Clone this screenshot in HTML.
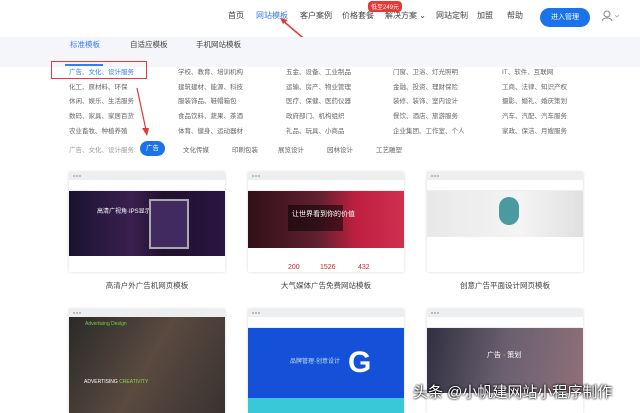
<!DOCTYPE html>
<html><head><meta charset="utf-8"><style>
*{margin:0;padding:0;box-sizing:border-box}
body{width:640px;height:413px;overflow:hidden;background:#fff;font-family:"Liberation Sans","Noto Sans CJK SC",sans-serif;position:relative;color:#555}
.a{position:absolute;white-space:nowrap}
.nav{font-size:8px;color:#444;top:10px}
.band{position:absolute;left:0;top:37px;width:640px;height:30px;background:#f4f6f9}
.cat{font-size:6.5px;color:#666}
.card{position:absolute;width:156px;background:#fff;box-shadow:0 0 3px rgba(0,0,0,.15);overflow:hidden}
.bar{height:8px;background:#eceef0;position:relative}
.bar:before{content:"";position:absolute;left:4px;top:3px;width:2px;height:2px;background:#bbb;box-shadow:3px 0 #bbb,6px 0 #bbb}
.hd{height:11px;background:#fff;border-bottom:1px solid #eee}
.lab{font-size:7.5px;color:#444;text-align:center;width:156px}
</style></head><body>
<div class="a nav" style="left:228px">首页</div>
<div class="a nav" style="left:256px;color:#3a7cf0">网站模板</div>
<div class="a nav" style="left:300px">客户案例</div>
<div class="a nav" style="left:342px">价格套餐</div>
<div class="a nav" style="left:385px">解决方案 ⌄</div>
<div class="a nav" style="left:436px">网站定制</div>
<div class="a nav" style="left:477px">加盟</div>
<div class="a nav" style="left:507px">帮助</div>
<div class="a" style="left:368px;top:1px;background:#e53935;color:#fff;font-size:6px;padding:1px 3px;border-radius:4px">低至249元</div>
<div class="a" style="left:540px;top:8px;width:50px;height:19px;background:#1a73e8;border-radius:10px;color:#fff;font-size:7px;text-align:center;line-height:19px">进入管理</div>
<svg class="a" style="left:602px;top:10px" width="18" height="12"><circle cx="5" cy="4" r="3" fill="none" stroke="#888"/><path d="M0 11c1-4 9-4 10 0" fill="none" stroke="#888"/><path d="M13 5l2 2 2-2" fill="none" stroke="#aaa" stroke-width=".8"/></svg>
<svg class="a" style="left:280px;top:18px" width="40" height="35"><path d="M2 2L35 30" stroke="#e53935" stroke-width="1.5"/><path d="M0 0l8 2-5 4z" fill="#e53935"/></svg>
<div class="band"></div>
<div class="a" style="left:70px;top:39px;font-size:7.5px;color:#3a7cf0">标准模板</div>
<div class="a" style="left:65px;top:64px;width:38px;height:2px;background:#3a7cf0"></div>
<div class="a" style="left:130px;top:39px;font-size:7.5px;color:#444">自适应模板</div>
<div class="a" style="left:196px;top:39px;font-size:7.5px;color:#444">手机网站模板</div>
<div class="a" style="left:51px;top:61px;width:96px;height:18px;border:1.5px solid #e53935"></div>
<svg class="a" style="left:134px;top:86px" width="20" height="52"><path d="M3 2L12 44" stroke="#e53935" stroke-width="1.2"/><path d="M8 42l7 0-2 8z" fill="#e53935"/></svg>
<div class="a cat" style="left:69px;top:66px;color:#3a7cf0">广告、文化、设计服务</div>
<div class="a cat" style="left:178px;top:66px">学校、教育、培训机构</div>
<div class="a cat" style="left:286px;top:66px">五金、设备、工业制品</div>
<div class="a cat" style="left:393px;top:66px">门窗、卫浴、灯光照明</div>
<div class="a cat" style="left:502px;top:66px">IT、软件、互联网</div>
<div class="a cat" style="left:69px;top:81px">化工、原材料、环保</div>
<div class="a cat" style="left:178px;top:81px">建筑建材、能源、科技</div>
<div class="a cat" style="left:286px;top:81px">运输、房产、物业管理</div>
<div class="a cat" style="left:393px;top:81px">金融、投资、理财保险</div>
<div class="a cat" style="left:502px;top:81px">工商、法律、知识产权</div>
<div class="a cat" style="left:69px;top:95px">休闲、娱乐、生活服务</div>
<div class="a cat" style="left:178px;top:95px">服装饰品、鞋帽箱包</div>
<div class="a cat" style="left:286px;top:95px">医疗、保健、医药仪器</div>
<div class="a cat" style="left:393px;top:95px">装修、装饰、室内设计</div>
<div class="a cat" style="left:502px;top:95px">摄影、婚礼、婚庆策划</div>
<div class="a cat" style="left:69px;top:110px">数码、家具、家居百货</div>
<div class="a cat" style="left:178px;top:110px">食品饮料、蔬果、茶酒</div>
<div class="a cat" style="left:286px;top:110px">政府部门、机构组织</div>
<div class="a cat" style="left:393px;top:110px">餐饮、酒店、旅游服务</div>
<div class="a cat" style="left:502px;top:110px">汽车、汽配、汽车服务</div>
<div class="a cat" style="left:69px;top:125px">农业畜牧、种植养殖</div>
<div class="a cat" style="left:178px;top:125px">体育、健身、运动器材</div>
<div class="a cat" style="left:286px;top:125px">礼品、玩具、小商品</div>
<div class="a cat" style="left:393px;top:125px">企业集团、工作室、个人</div>
<div class="a cat" style="left:502px;top:125px">家政、保洁、月嫂服务</div>
<div class="a cat" style="left:69px;top:144px;color:#999">广告、文化、设计服务:</div>
<div class="a" style="left:140px;top:141px;width:25px;height:15px;background:#1a73e8;border-radius:8px;color:#fff;font-size:6.5px;text-align:center;line-height:15px">广告</div>
<div class="a cat" style="left:183px;top:144px">文化传媒</div>
<div class="a cat" style="left:232px;top:144px">印刷包装</div>
<div class="a cat" style="left:278px;top:144px">展览设计</div>
<div class="a cat" style="left:327px;top:144px">园林设计</div>
<div class="a cat" style="left:376px;top:144px">工艺雕塑</div>

<div class="card" style="left:69px;top:172px;height:100px"><div class="bar"></div><div class="hd"></div>
<div style="height:65px;background:linear-gradient(90deg,#1a1230,#3a2050 40%,#201030 60%,#2a1540);position:relative"><div class="a" style="left:28px;top:15px;color:#fff;font-size:6px">高清广视角·IPS显示</div><div class="a" style="left:80px;top:8px;width:40px;height:50px;border:2px solid #aaa;background:#402a60"></div></div></div>
<div class="a lab" style="left:69px;top:280px">高清户外广告机网页模板</div>

<div class="card" style="left:248px;top:172px;height:100px"><div class="bar"></div><div class="hd"></div>
<div style="height:57px;background:linear-gradient(90deg,#301018,#602030 45%,#c02040 70%,#d03050);position:relative"><div class="a" style="left:40px;top:14px;width:55px;height:26px;background:rgba(0,0,0,.5)"></div><div class="a" style="left:44px;top:18px;color:#fff;font-size:7px">让世界看到你的价值</div></div>
<div class="a" style="left:40px;top:92px;color:#c62828;font-size:7px">200</div><div class="a" style="left:72px;top:92px;color:#c62828;font-size:7px">1526</div><div class="a" style="left:110px;top:92px;color:#c62828;font-size:7px">432</div></div>
<div class="a lab" style="left:248px;top:280px">大气媒体广告免费网站模板</div>

<div class="card" style="left:427px;top:172px;height:100px"><div class="bar"></div><div class="hd"></div>
<div style="height:46px;background:linear-gradient(90deg,#e8e8e8,#f4f4f4 60%,#e0e0e0);position:relative"><div class="a" style="left:72px;top:6px;width:20px;height:28px;border-radius:10px;background:#4a9aa0"></div></div></div>
<div class="a lab" style="left:427px;top:280px">创意广告平面设计网页模板</div>

<div class="card" style="left:69px;top:309px;height:104px"><div class="bar"></div>
<div style="height:96px;background:linear-gradient(120deg,#2a2a28,#5a4a40 50%,#3a3230);position:relative"><div class="a" style="left:16px;top:4px;color:#7c4;font-size:5px">Advertising Design</div><div class="a" style="left:15px;top:62px;color:#fff;font-size:5px">ADVERTISING <span style="color:#8d4">CREATIVITY</span></div></div></div>

<div class="card" style="left:248px;top:309px;height:104px"><div class="bar"></div><div class="hd"></div>
<div style="height:70px;background:#1550d8;position:relative"><div class="a" style="left:42px;top:28px;color:#cde;font-size:6px">品牌管理·创意设计</div><div class="a" style="left:100px;top:18px;color:#fff;font-size:30px;font-weight:bold">G</div></div><div style="height:15px;background:#38c8d8"></div></div>

<div class="card" style="left:427px;top:309px;height:104px"><div class="bar"></div><div class="hd"></div>
<div style="height:65px;background:linear-gradient(100deg,#303040,#6a6070 50%,#907078);position:relative"><div class="a" style="left:60px;top:22px;color:#fff;font-size:7px">广告 · 策划</div></div></div>

<div class="a" style="left:413px;top:381px;color:#fff;font-size:15px;text-shadow:0 0 2px #000,0 0 2px #000">头条 @小帆建网站小程序制作</div>
</body></html>
